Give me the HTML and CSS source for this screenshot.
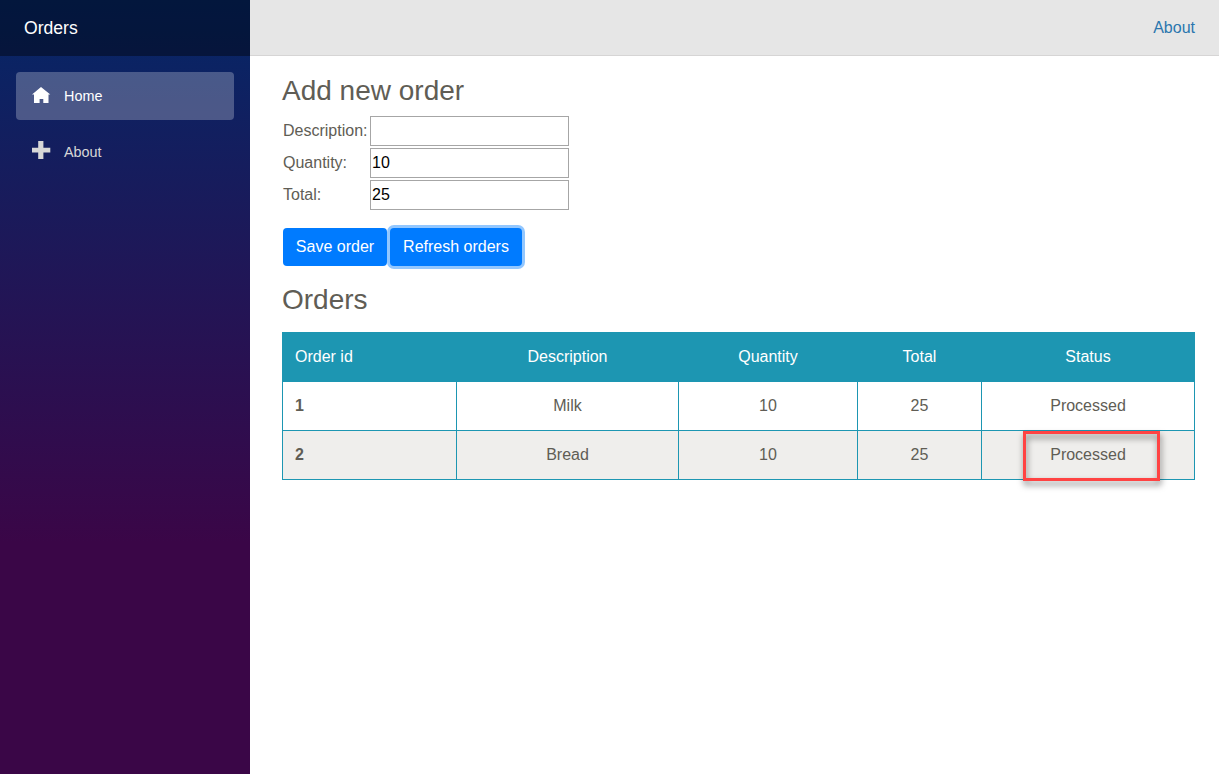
FILE: index.html
```html
<!DOCTYPE html>
<html lang="en">
<head>
<meta charset="utf-8">
<title>Orders</title>
<link rel="stylesheet" href="styles.css">
</head>
<body>
<div class="app">
  <aside class="sidebar">
    <div class="brand">Orders</div>
    <nav class="nav">
      <a class="nav-link active"><svg class="icon" viewBox="0 0 20 20"><path d="M10 2 L19.3 9.5 H17.5 V18 H12.3 V14 H8.6 V18 H3 V9.5 H1 Z"/></svg>Home</a>
      <a class="nav-link"><svg class="icon" viewBox="0 0 20 20"><path d="M7.2 0 H12.4 V6.7 H19.3 V11.6 H12.4 V18 H7.2 V11.6 H1 V6.7 H7.2 Z"/></svg>About</a>
    </nav>
  </aside>
  <main class="main">
    <header class="top-row"><a class="top-link">About</a></header>
    <section class="content">
      <h3 class="title">Add new order</h3>
      <form class="form">
        <label class="label">Description:</label><input class="input" type="text">
        <label class="label">Quantity:</label><input class="input" type="text" value="10">
        <label class="label">Total:</label><input class="input" type="text" value="25">
      </form>
      <div class="buttons">
        <button class="btn" type="button">Save order</button>
        <button class="btn focused" type="button">Refresh orders</button>
      </div>
      <h3 class="title">Orders</h3>
      <div class="table">
        <div class="row head"><span>Order id</span><span>Description</span><span>Quantity</span><span>Total</span><span>Status</span></div>
        <div class="row"><b>1</b><span>Milk</span><span>10</span><span>25</span><span>Processed</span></div>
        <div class="row alt"><b>2</b><span>Bread</span><span>10</span><span>25</span><span class="marked">Processed<i class="marker"></i></span></div>
      </div>
    </section>
  </main>
</div>
</body>
</html>
```

FILE: styles.css
```css
* { box-sizing: border-box; }
body {
  margin: 0;
  font: 16px/24px "Liberation Sans", Arial, sans-serif;
  color: #605d55;
  background: #fff;
}
.app { display: flex; height: 774px; overflow: hidden; }
.sidebar {
  width: 250px;
  flex: none;
  background: linear-gradient(180deg, #052767 0%, #3a0647 70%);
}
.brand {
  height: 56px;
  padding-left: 24px;
  font-size: 17.6px;
  line-height: 56px;
  color: #fff;
  background: rgba(0, 0, 0, .4);
}
.nav { display: flex; flex-direction: column; gap: 8px; padding: 16px; }
.nav-link {
  display: flex;
  align-items: center;
  height: 48px;
  padding-left: 15px;
  border-radius: 4px;
  font-size: 14.4px;
  color: #d7d7d7;
}
.nav-link.active { background: rgba(255, 255, 255, .25); color: #fff; }
.icon { width: 20px; height: 20px; margin: 0 13px 2px 0; fill: currentColor; }
.main { flex: 1; }
.top-row {
  display: flex;
  align-items: center;
  justify-content: flex-end;
  height: 56px;
  padding-right: 24px;
  background: #e6e6e6;
  border-bottom: 1px solid #d6d5d5;
}
.top-link { color: #2b76ae; }
.content { padding: 18px 24px 0 32px; }
.title { margin: 0; font-size: 28px; font-weight: 400; line-height: 34px; }
.form {
  display: grid;
  grid-template-columns: 87px 199px;
  grid-auto-rows: 30px;
  gap: 2px 0;
  margin: 8px 0 0 1px;
}
.label { line-height: 29px; }
.input {
  width: 199px;
  height: 30px;
  padding: 1px;
  border: 1px solid #a6a6a6;
  font: 16px "Liberation Sans", Arial, sans-serif;
  color: #000;
  background: #fff;
}
.buttons { display: flex; gap: 3px; margin: 18px 0 17px 1px; }
.btn {
  width: 104px;
  height: 38px;
  padding: 0;
  border: 0;
  border-radius: 4px;
  font: 16px/24px "Liberation Sans", Arial, sans-serif;
  color: #fff;
  background: #007bff;
}
.btn.focused { width: 132px; box-shadow: 0 0 0 3px rgba(38, 143, 255, .5); }
.table { margin-top: 15px; border: 1px solid #1d96b2; border-top: 0; }
.row {
  display: grid;
  grid-template-columns: 174px 222px 179px 124px 1fr;
  height: 49px;
  border-bottom: 1px solid #1d96b2;
  line-height: 48px;
  text-align: center;
}
.row:last-child { border-bottom: 0; height: 48px; }
.row > * { border-right: 1px solid #1d96b2; }
.row > :first-child { padding-left: 12px; text-align: left; }
.row > :last-child { border-right: 0; }
.head { height: 50px; background: #1d96b2; color: #fff; line-height: 50px; }
.alt { background: #efeeec; }
.marked { position: relative; }
.marker {
  position: absolute;
  left: 41px;
  top: 0;
  width: 137px;
  height: 50px;
  border: 3px solid #ff4343;
  filter: drop-shadow(1px 4px 3px rgba(0, 0, 0, .5));
}
```
